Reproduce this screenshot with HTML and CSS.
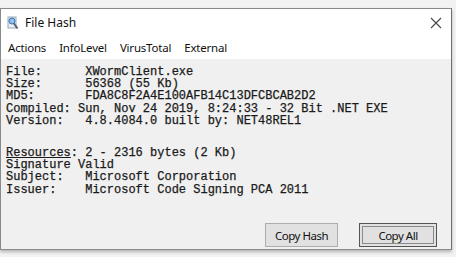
FILE: index.html
```html
<!DOCTYPE html>
<html lang="en">
<head>
    <meta charset="UTF-8">
    <title>File Hash</title>
    <link rel="stylesheet" href="styles.css">
</head>
<body>
    <div class="window">
        <div class="titlebar">
            <svg class="app-icon" width="12" height="14" viewBox="0 0 12 14">
                <rect x="1" y="1" width="8" height="11" fill="#e8eef5" stroke="#9aa8b8" stroke-width="1"/>
                <circle cx="5" cy="5" r="3" fill="#8fc1ee" stroke="#3a6fb0" stroke-width="1"/>
                <line x1="7" y1="7.5" x2="10.5" y2="12.5" stroke="#5a6170" stroke-width="2"/>
            </svg>
            <span class="title">File Hash</span>
            <svg class="close" width="12" height="12" viewBox="0 0 12 12">
                <path d="M1 1 L11 11 M11 1 L1 11" stroke="#444" stroke-width="1.1" fill="none"/>
            </svg>
        </div>

        <div class="menubar">
            <span>Actions</span>
            <span>InfoLevel</span>
            <span>VirusTotal</span>
            <span>External</span>
        </div>

        <div class="content">
<pre class="info">File:      XWormClient.exe
Size:      56368 (55 Kb)
MD5:       FDA8C8F2A4E100AFB14C13DFCBCAB2D2
Compiled: Sun, Nov 24 2019, 8:24:33 - 32 Bit .NET EXE
Version:   4.8.4084.0 built by: NET48REL1</pre>
<pre class="info signature"><u>Resources</u>: 2 - 2316 bytes (2 Kb)
Signature Valid
Subject:   Microsoft Corporation
Issuer:    Microsoft Code Signing PCA 2011</pre>

            <div class="buttons">
                <button class="btn">Copy Hash</button>
                <button class="btn default">Copy All</button>
            </div>
        </div>
    </div>
</body>
</html>
```

FILE: styles.css
```css
body {
    margin: 0;
    width: 456px;
    height: 257px;
    background-color: #f2f2f2;
    font-family: "Noto Sans", "Open Sans", sans-serif;
    overflow: hidden;
}
.window {
    margin-top: 8px;
    width: 450px;
    height: 240px;
    border: 1px solid #8a8a8a;
    border-right-color: #6e6e6e;
    background-color: white;
    display: flex;
    flex-direction: column;
    box-shadow: 0 2px 3px rgba(0, 0, 0, 0.25);
}
.titlebar {
    height: 27px;
    display: flex;
    align-items: center;
    padding: 0 9px 0 6px;
}
.app-icon {
    margin-right: 6px;
}
.title {
    font-size: 12px;
    color: #111;
    flex: 1;
}
.menubar {
    height: 23px;
    display: flex;
    align-items: center;
    gap: 13px;
    padding-left: 7px;
    font-size: 11.5px;
    color: #111;
    letter-spacing: -0.2px;
}
.content {
    flex: 1;
    background-color: #f0f0f0;
    display: flex;
    flex-direction: column;
    padding: 7px 14px 2px 5px;
}
.info {
    margin: 0;
    font-family: "Liberation Mono", "Courier New", monospace;
    font-size: 12px;
    line-height: 12.2px;
    color: #1a1a1a;
    -webkit-text-stroke: 0.25px #1a1a1a;
}
.info u {
    text-underline-offset: 1px;
}
.signature {
    margin-top: 20px;
}
.buttons {
    margin-top: auto;
    display: flex;
    justify-content: flex-end;
    gap: 21px;
}
.btn {
    height: 24px;
    width: 73px;
    padding: 0;
    font-family: "Noto Sans", "Open Sans", sans-serif;
    font-size: 11.5px;
    letter-spacing: -0.5px;
    color: #111;
    background-color: #e1e1e1;
    border: 1px solid #adadad;
}
.btn.default {
    width: 78px;
    border: 1px solid #555;
    box-shadow: inset 0 0 0 2px #e1e1e1, inset 0 0 0 3px #8a8a8a;
}
```
